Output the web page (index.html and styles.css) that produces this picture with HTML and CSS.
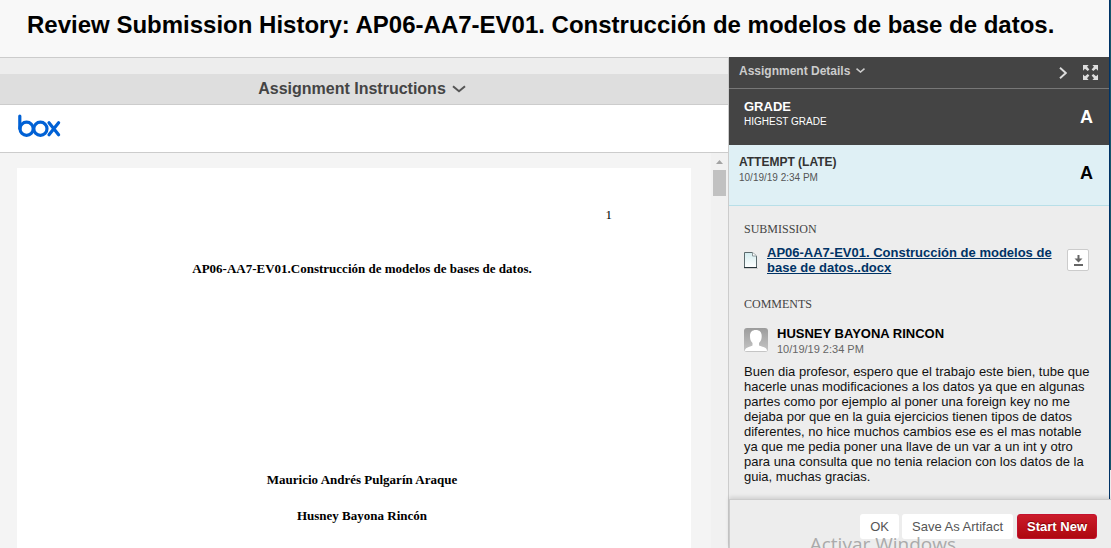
FILE: index.html
```
<!DOCTYPE html>
<html lang="es">
<head>
<meta charset="utf-8">
<title>Review Submission History</title>
<link rel="stylesheet" href="styles.css">
</head>
<body>
<div class="page">
  <header class="page-header">
    <h1>Review Submission History: AP06-AA7-EV01. Construcción de modelos de base de datos.</h1>
  </header>
  <div class="workspace">
    <main class="viewer">
      <button class="instructions" type="button">Assignment Instructions
        <svg width="14" height="8" viewBox="0 0 14 8" aria-hidden="true"><path d="M1 1.2 L7 6.2 L13 1.2" fill="none" stroke="#555" stroke-width="2"/></svg>
      </button>
      <div class="box-bar">
        <svg width="43" height="24" viewBox="0 0 43 24" role="img" aria-label="box">
          <g fill="none" stroke="#0061d5" stroke-width="3.2" stroke-linecap="round">
            <path d="M1.8 2 V14.5"/>
            <circle cx="8.6" cy="14.8" r="6.6"/>
            <circle cx="22.4" cy="14.8" r="6.6"/>
            <path d="M31 8.8 L40.6 20.8 M40.6 8.8 L31 20.8"/>
          </g>
        </svg>
      </div>
      <div class="document">
        <article class="paper">
          <p class="page-number">1</p>
          <h2>AP06-AA7-EV01.Construcción de modelos de bases de datos.</h2>
          <p class="author">Mauricio Andrés Pulgarín Araque</p>
          <p class="author">Husney Bayona Rincón</p>
        </article>
        <div class="scrollbar">
          <svg width="7" height="4" viewBox="0 0 7 4" aria-hidden="true"><path d="M0 4 L3.5 0 L7 4z" fill="#a3a3a3"/></svg>
          <div class="thumb"></div>
        </div>
      </div>
    </main>
    <aside class="details">
      <div class="details-bar">
        <button class="details-toggle" type="button">Assignment Details
          <svg width="9" height="5" viewBox="0 0 9 5" aria-hidden="true"><path d="M.5 .7 L4.5 4 L8.5 .7" fill="none" stroke="#ccc" stroke-width="1.6"/></svg>
        </button>
        <button class="icon-button" type="button" aria-label="Collapse">
          <svg width="8" height="12" viewBox="0 0 8 12"><path d="M1 .8 L6.8 6 L1 11.2" fill="none" stroke="#ddd" stroke-width="1.9"/></svg>
        </button>
        <button class="icon-button" type="button" aria-label="Full screen">
          <svg width="15" height="15" viewBox="0 0 16 16"><g fill="#ddd"><path d="M0 0H6L4.3 1.8L6.8 4.8L5 6.5L2.1 3.9L0 6z"/><path d="M16 0H10L11.7 1.8L9.2 4.8L11 6.5L13.9 3.9L16 6z"/><path d="M0 16H6L4.3 14.2L6.8 11.2L5 9.5L2.1 12.1L0 10z"/><path d="M16 16H10L11.7 14.2L9.2 11.2L11 9.5L13.9 12.1L16 10z"/></g></svg>
        </button>
      </div>
      <section class="grade">
        <div>
          <h2>GRADE</h2>
          <p>HIGHEST GRADE</p>
        </div>
        <strong class="mark">A</strong>
      </section>
      <section class="attempt">
        <div>
          <h2>ATTEMPT (LATE)</h2>
          <p>10/19/19 2:34 PM</p>
        </div>
        <strong class="mark">A</strong>
      </section>
      <div class="details-body">
        <h3>SUBMISSION</h3>
        <div class="file">
          <svg width="14" height="17" viewBox="0 0 14 17" aria-hidden="true">
            <defs><linearGradient id="sheet" x2="0" y2="1"><stop stop-color="#d3ecef"/><stop offset="1" stop-color="#fff"/></linearGradient></defs>
            <path d="M.5 .5H8.5L12.5 4V15.5H.5z" fill="url(#sheet)" stroke="#5b6a6d"/>
            <path d="M8.5 .5V4H12.5" fill="#fff" stroke="#8a9799"/>
            <path d="M0 15.5H13" stroke="#26343a"/>
            <path d="M0 16.5H14" stroke="#ccc"/>
          </svg>
          <a href="#">AP06-AA7-EV01. Construcción de modelos de base de datos..docx</a>
          <button class="download" type="button" aria-label="Download">
            <svg width="9" height="11" viewBox="0 0 9 11"><path d="M3.5 0H5.5V3.4H8.5L4.5 7.6L.5 3.4H3.5zM0 9H9V11H0z" fill="#666"/></svg>
          </button>
        </div>
        <h3>COMMENTS</h3>
        <div class="commenter">
          <svg width="24" height="24" viewBox="0 0 24 24" aria-hidden="true">
            <defs><linearGradient id="grey" x2="0" y2="1"><stop stop-color="#9c9c9c"/><stop offset="1" stop-color="#c6c6c6"/></linearGradient></defs>
            <rect width="24" height="24" rx="3" fill="url(#grey)"/>
            <path d="M1 23C1 19.5 4 19.5 8.5 17.5V15C6.5 13 6 11 6 8C6 4 8.2 2 11.8 2C15.5 2 17.7 4 17.7 8C17.7 11 17 13 15 15V17.5C20 19.5 23 19.5 23 23z" fill="#fff"/>
          </svg>
          <div>
            <h4>HUSNEY BAYONA RINCON</h4>
            <p>10/19/19 2:34 PM</p>
          </div>
        </div>
        <p class="comment">Buen dia profesor, espero que el trabajo este bien, tube que hacerle unas modificaciones a los datos ya que en algunas partes como por ejemplo al poner una foreign key no me dejaba por que en la guia ejercicios tienen tipos de datos diferentes, no hice muchos cambios ese es el mas notable ya que me pedia poner una llave de un var a un int y otro para una consulta que no tenia relacion con los datos de la guia, muchas gracias.</p>
      </div>
      <footer class="actions">
        <button type="button">OK</button>
        <button type="button">Save As Artifact</button>
        <button class="primary" type="button">Start New</button>
      </footer>
    </aside>
  </div>
  <div class="edge"></div>
  <div class="watermark">Activar Windows</div>
</div>
</body>
</html>
```
FILE: styles.css
```
* { box-sizing: border-box; }
body {
  margin: 0;
  font-family: "Liberation Sans", Arial, sans-serif;
  font-size: 12px;
  color: #000;
}
h1, h2, h3, h4, p { margin: 0; }
svg { display: block; flex: none; }
button { font: inherit; border: 0; padding: 0; background: none; cursor: pointer; }

.page {
  position: relative;
  height: 100vh;
  overflow: hidden;
  display: flex;
  flex-direction: column;
  background: #f8f8f8;
}
.page-header { padding: 10px 27px 17px; }
.page-header h1 { font-size: 24px; line-height: 30px; white-space: nowrap; }
.workspace { flex: 1; min-height: 0; display: flex; }

.viewer {
  flex: 1;
  min-width: 0;
  display: flex;
  flex-direction: column;
  background: #ededed;
  border-top: 1px solid #ccc;
  border-right: 1px solid #ccc;
}
.instructions {
  display: flex;
  flex: none;
  align-items: center;
  justify-content: center;
  gap: 6px;
  margin-top: 16px;
  height: 31px;
  padding-right: 4px;
  background: #dedede;
  border-bottom: 1px solid #ccc;
  color: #444;
  font-size: 16px;
  font-weight: bold;
}
.box-bar {
  flex: none;
  height: 48px;
  padding: 9px 18px;
  background: #fff;
  border-bottom: 1px solid #ccc;
}
.document { flex: 1; min-height: 0; display: flex; gap: 20px; background: #f4f4f4; }
.paper {
  flex: 1;
  margin: 15px 0 0 17px;
  padding: 39px 79px 0;
  background: #fff;
  font-family: "Liberation Serif", "Times New Roman", serif;
  font-size: 13px;
  line-height: 16px;
  text-align: center;
  overflow: hidden;
}
.page-number { text-align: right; }
.paper h2 { margin: 38px 0 195px; font-size: 13px; }
.paper h2, .author { margin-left: 16px; }
.author { font-weight: bold; margin-bottom: 20px; }
.scrollbar {
  width: 17px;
  padding-top: 7px;
  background: #f1f1f1;
  display: flex;
  flex-direction: column;
  align-items: center;
  gap: 6px;
}
.thumb { width: 13px; height: 26px; background: #c1c1c1; }

.details {
  width: 382px;
  display: flex;
  flex-direction: column;
  background: #ededed;
}
.details-bar {
  flex: none;
  display: flex;
  align-items: center;
  height: 32px;
  padding: 0 13px 0 10px;
  background: #444;
  border-bottom: 1px solid #777;
}
.details-toggle {
  display: flex;
  align-items: center;
  gap: 6px;
  margin: 0 auto 4px 0;
  color: #ccc;
  font-weight: bold;
}
.icon-button { margin-left: 16px; }
.grade, .attempt {
  flex: none;
  display: flex;
  align-items: center;
  justify-content: space-between;
}
.grade { height: 56px; padding: 0 18px 6px 15px; background: #444; color: #fff; }
.grade h2 { font-size: 13px; line-height: 15px; }
.grade p { font-size: 10px; line-height: 15px; }
.attempt {
  height: 61px;
  padding: 0 18px 10px 10px;
  background: #dff0f5;
  border-bottom: 1px solid #b8dfe8;
}
.attempt h2 { color: #333; font-size: 12px; line-height: 15px; }
.attempt p { color: #555; font-size: 10px; line-height: 15px; }
.mark { margin-top: 6px; font-size: 18px; line-height: 20px; }

.details-body { flex: 1; min-height: 0; overflow: hidden; padding: 15px 18px 0 15px; }
.details-body h3 {
  color: #444;
  font-family: "Liberation Serif", "Times New Roman", serif;
  font-size: 12px;
  font-weight: normal;
  line-height: 16px;
}
.file { display: flex; align-items: center; gap: 9px; margin: 8px 0 21px; }
.file a { flex: 1; color: #036; font-size: 13px; font-weight: bold; line-height: 15px; }
.download {
  display: grid;
  place-items: center;
  width: 22px;
  height: 22px;
  margin-right: 4px;
  background: #fff;
  border: 1px solid #ccc;
  border-radius: 2px;
}
.file a { margin-right: -4px; }
.commenter { display: flex; align-items: flex-start; gap: 9px; margin: 14px 0 7px; }
.commenter svg { margin-top: 2px; }
.commenter h4 { font-size: 13px; line-height: 16px; }
.commenter p { color: #666; font-size: 11px; line-height: 15px; }
.comment { color: #111; font-size: 13px; line-height: 15px; }

.actions {
  position: relative;
  flex: none;
  display: flex;
  justify-content: flex-end;
  gap: 3px;
  height: 49px;
  padding: 14px 14px 9px;
  background: #ededed;
  border-top: 1px solid #ccc;
  border-left: 1px solid #ccc;
  box-shadow: 0 -2px 4px rgba(0, 0, 0, .12);
  z-index: 2;
}
.actions button {
  height: 25px;
  padding: 0 10px;
  background: #fff;
  border-radius: 3px;
  color: #555;
  font-size: 13px;
}
.actions .primary {
  margin-left: 1px;
  padding: 0 9px;
  background: linear-gradient(#cb1c2a, #ae0710);
  border: 1px solid #c3122f;
  color: #fff;
  font-weight: bold;
  text-shadow: 0 -1px 1px #700;
}
.edge {
  position: absolute;
  top: 0;
  right: 0;
  width: 2px;
  height: 100%;
  background: linear-gradient(#16566b 470px, #ededed 470px);
  border-left: 1px solid #036;
  z-index: 1;
}
.watermark {
  position: absolute;
  right: 155px;
  bottom: -9px;
  color: #aaa;
  font-family: "Open Sans", sans-serif;
  font-size: 19px;
  line-height: 26px;
  white-space: nowrap;
  z-index: 3;
}
```
